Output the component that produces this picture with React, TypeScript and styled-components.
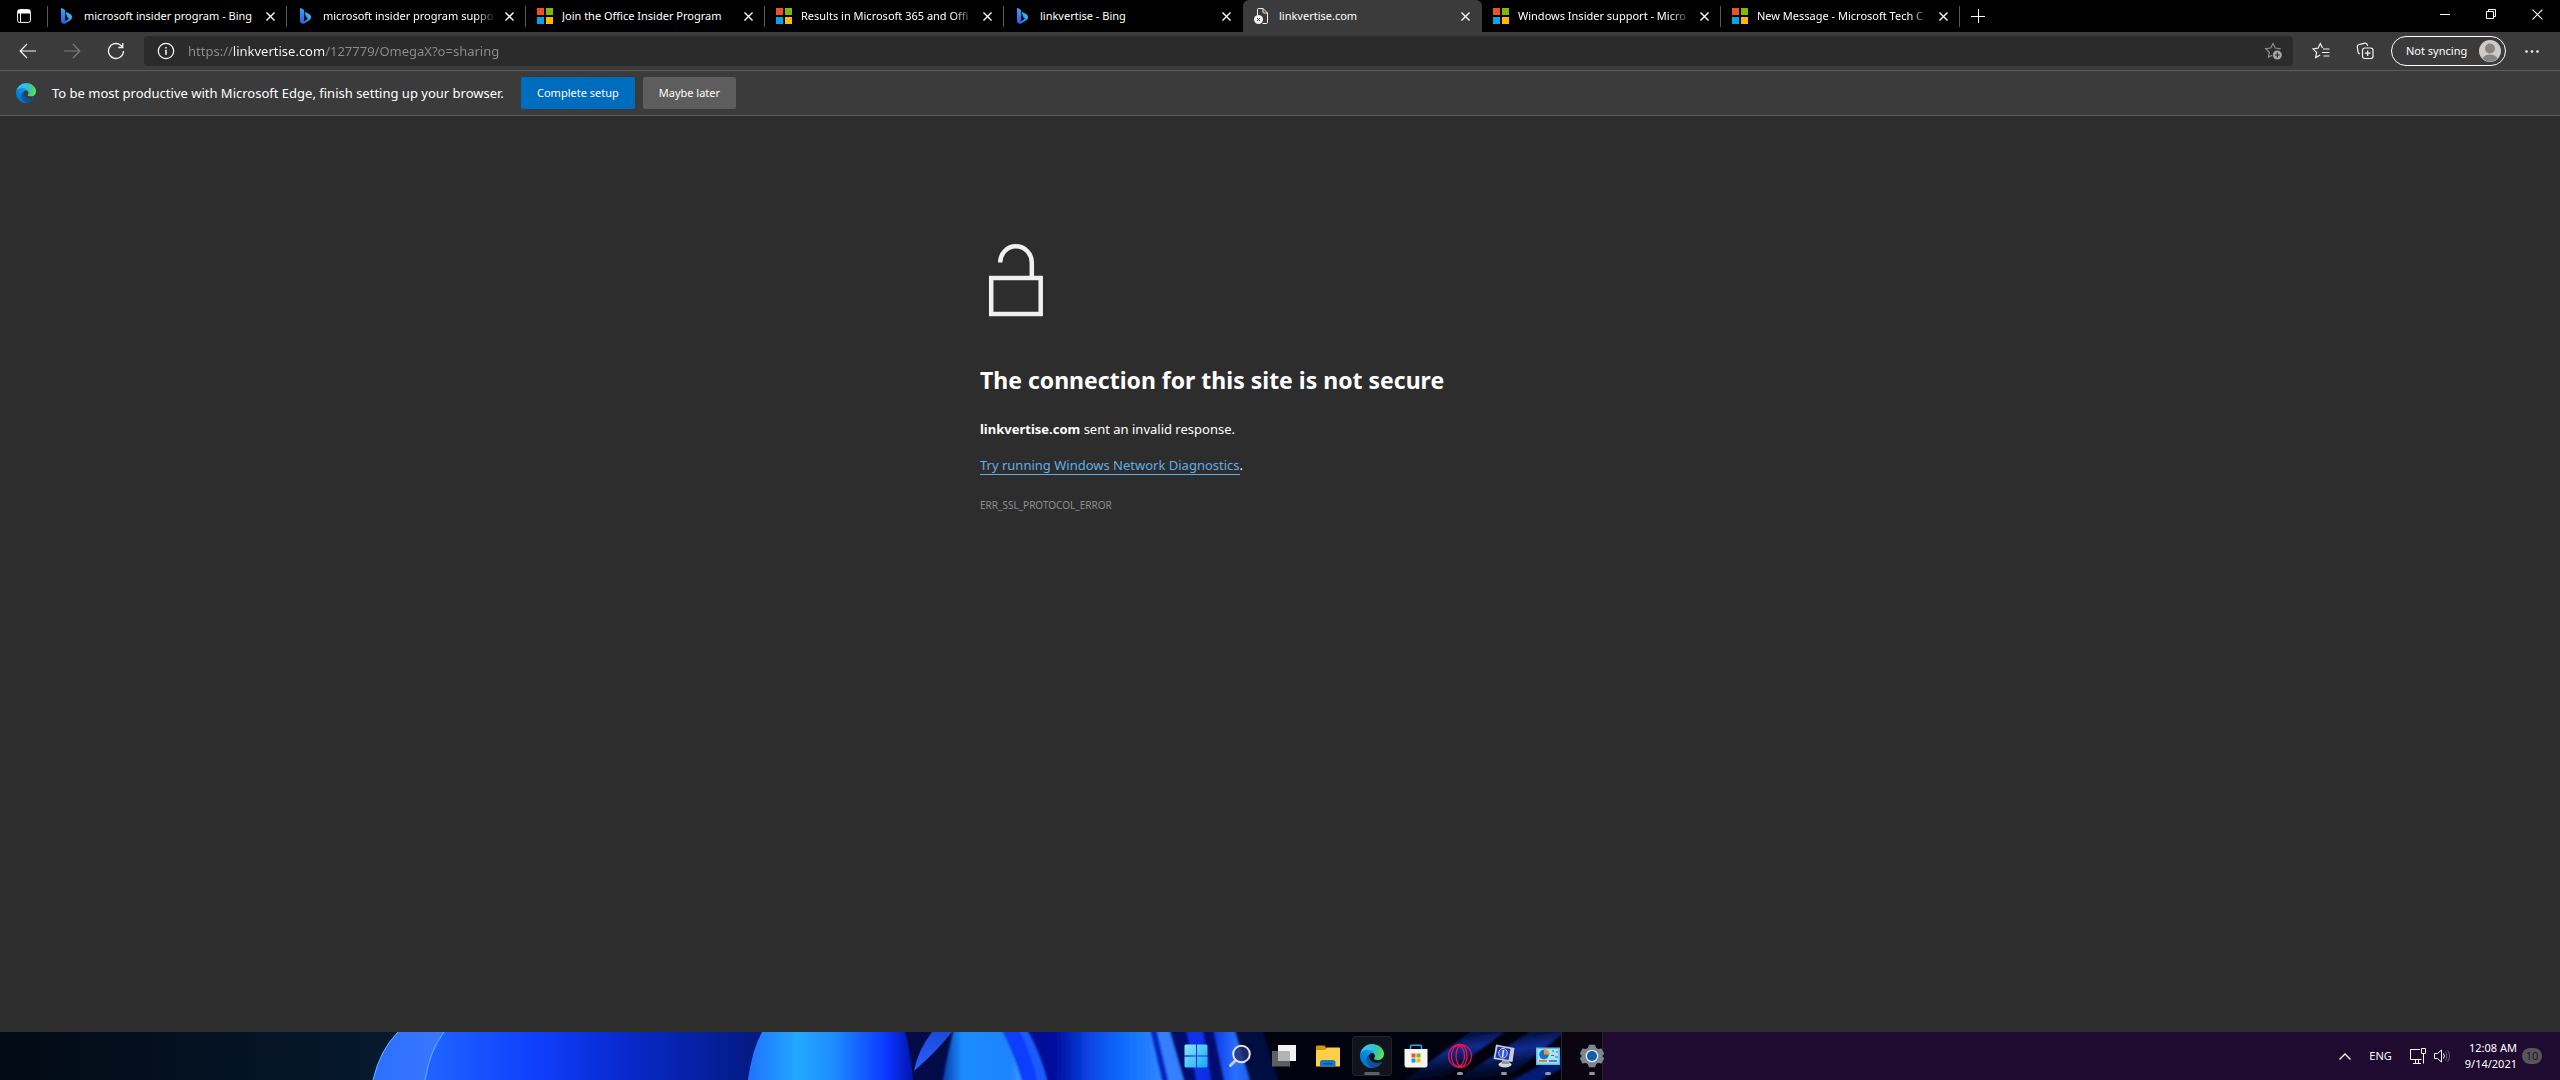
import React from "react";
import styled, { createGlobalStyle, css } from "styled-components";

const ui = `"Noto Sans", "Open Sans", sans-serif`;

const GlobalStyle = createGlobalStyle`
  * { box-sizing: border-box; }
  body { margin: 0; background: #2d2d2d; font-family: ${ui}; }
  button { font-family: inherit; border: 0; padding: 0; margin: 0; background: none; color: inherit; }
  svg { display: block; flex: none; }
`;

const Screen = styled.div`
  display: flex;
  flex-direction: column;
  min-height: 100vh;
  color: #fff;
`;

/* ---------- tab strip ---------- */

const TabStrip = styled.header`
  display: flex;
  height: 32px;
  background: #000;
`;

const TabActions = styled.button`
  display: grid;
  place-items: center;
  width: 48px;
`;

const TabList = styled.div`
  display: flex;
  min-width: 0;
`;

const Tab = styled.div<{ $active?: boolean; $divided?: boolean }>`
  position: relative;
  display: flex;
  align-items: center;
  flex: 0 1 239px;
  width: 239px;
  padding: 0 9px 0 11px;
  ${(p) => p.$active && css`
    background: #3b3b3b;
    border-radius: 6px 6px 0 0;
  `}
  ${(p) => p.$divided && css`
    &::before {
      content: "";
      position: absolute;
      left: -1px;
      top: 6px;
      width: 1px;
      height: 21px;
      background: #5a5a5a;
    }
  `}
`;

const TabTitle = styled.button<{ $fade?: boolean }>`
  flex: 1;
  min-width: 0;
  margin: 0 4px 0 9px;
  overflow: hidden;
  white-space: nowrap;
  text-align: left;
  font-size: 11px;
  line-height: 20px;
  ${(p) => p.$fade && css`
    mask-image: linear-gradient(90deg, #000 calc(100% - 22px), transparent);
  `}
`;

const TabClose = styled.button`
  display: grid;
  place-items: center;
  width: 16px;
  height: 16px;
`;

const NewTab = styled.button`
  position: relative;
  display: grid;
  place-items: center;
  width: 36px;
  &::before {
    content: "";
    position: absolute;
    left: -1px;
    top: 6px;
    width: 1px;
    height: 21px;
    background: #5a5a5a;
  }
`;

const WindowControls = styled.div`
  display: flex;
  margin-left: auto;
`;

const WindowButton = styled.button`
  display: grid;
  place-items: center;
  width: 46px;
  height: 28px;
`;

/* ---------- toolbar ---------- */

const Toolbar = styled.nav`
  display: flex;
  align-items: center;
  height: 39px;
  padding: 0 6px;
  background: #3b3b3b;
  border-bottom: 1px solid #5c5c5c;
`;

const ToolButton = styled.button<{ $dim?: boolean }>`
  display: grid;
  place-items: center;
  width: 44px;
  height: 30px;
  color: ${(p) => (p.$dim ? "#7c7c7c" : "#f4f4f4")};
`;

const AddressBar = styled.form`
  display: flex;
  flex: 1;
  align-items: center;
  height: 30px;
  margin: 0 6px;
  padding: 0 10px 0 12px;
  border-radius: 4px;
  background: #2b2b2b;
`;

const Address = styled.input`
  flex: 1;
  min-width: 0;
  height: 24px;
  margin: 0 12px;
  padding: 0;
  border: 0;
  outline: 0;
  font: 13px/24px ${ui};
  color: transparent;
  background: linear-gradient(90deg, #8d8d8d 46px, #fff 46px, #fff 137px, #8d8d8d 137px);
  background-clip: text;
  -webkit-background-clip: text;
`;

const BarIcon = styled.button`
  display: grid;
  place-items: center;
  width: 20px;
  height: 24px;
`;

const Profile = styled.button`
  display: flex;
  align-items: center;
  justify-content: space-between;
  width: 115px;
  height: 30px;
  margin: 0 4px;
  padding: 0 4px 0 14px;
  border: 1px solid #fff;
  border-radius: 15px;
  font-size: 11px;
  line-height: 16px;
  white-space: nowrap;
`;

/* ---------- setup bar ---------- */

const SetupBar = styled.section`
  display: flex;
  align-items: center;
  height: 45px;
  padding: 0 16px;
  background: #3b3b3b;
  border-bottom: 1px solid #5c5c5c;
`;

const SetupText = styled.p`
  width: 453px;
  margin: 0 0 0 16px;
  font-size: 13px;
  line-height: 20px;
  white-space: nowrap;
`;

const SetupActions = styled.div`
  display: flex;
  gap: 8px;
  margin-left: 16px;
`;

const SetupButton = styled.button<{ $primary?: boolean }>`
  height: 32px;
  padding: 0 16px;
  border-radius: 2px;
  background: ${(p) => (p.$primary ? "#006cbe" : "#5d5d5d")};
  font-size: 11px;
  line-height: 16px;
`;

/* ---------- error page ---------- */

const Page = styled.main`
  flex: 1;
  background: #2d2d2d;
`;

const ErrorBox = styled.article`
  max-width: 600px;
  margin: 0 auto;
  padding-top: 124px;
`;

const Heading = styled.h1`
  margin: 44px 0 0;
  font-size: 23px;
  font-weight: 700;
  line-height: 32px;
`;

const Line = styled.p`
  margin: 21px 0 0;
  font-size: 13px;
  line-height: 24px;
  & + & { margin-top: 12px; }
`;

const Diagnostics = styled.a`
  color: #63ade5;
  text-decoration: none;
  border-bottom: 1px solid #63ade5;
`;

const Code = styled.p`
  margin: 20px 0 0;
  color: #8e8e8e;
  font-size: 10px;
  line-height: 16px;
`;

/* ---------- taskbar ---------- */

const Taskbar = styled.footer`
  position: relative;
  display: grid;
  grid-template-columns: 1173fr auto 945fr;
  height: 48px;
  overflow: hidden;
  background: #200b30;
`;

const Wallpaper = styled.svg`
  position: absolute;
  left: 0;
  top: 0;
`;

const Apps = styled.div`
  position: relative;
  display: flex;
  grid-column: 2;
  align-items: center;
  gap: 4px;
`;

const AppButton = styled.button<{ $active?: boolean; $running?: boolean }>`
  position: relative;
  display: grid;
  place-items: center;
  width: 40px;
  height: 40px;
  border-radius: 4px;
  ${(p) => p.$active && css`
    background: #11131d;
    box-shadow: inset 0 0 0 1px #1f212b;
  `}
  ${(p) => (p.$running || p.$active) && css`
    &::after {
      content: "";
      position: absolute;
      left: 50%;
      bottom: 1px;
      width: ${p.$active ? 16 : 6}px;
      height: 3px;
      border-radius: 2px;
      background: ${p.$active ? "#5d5e62" : "#97979c"};
      transform: translateX(-50%);
    }
  `}
`;

const Tray = styled.div`
  position: relative;
  display: flex;
  align-items: center;
  justify-content: flex-end;
  padding-right: 18px;
`;

const TrayButton = styled.button`
  display: flex;
  align-items: center;
  gap: 8px;
  height: 40px;
  padding: 0 9px;
  font-size: 11px;
  line-height: 16px;
`;

const Clock = styled.button`
  margin: 0 5px 0 6px;
  font-size: 11px;
  line-height: 16px;
  text-align: right;
  white-space: nowrap;
`;

const Badge = styled.span`
  width: 20px;
  border-radius: 8px;
  background: #56555a;
  color: #1d1420;
  text-align: center;
  font-size: 11px;
  line-height: 16px;
`;

/* ---------- drawings ---------- */

const stroke = { fill: "none", stroke: "currentColor" } as const;

const MsLogo = () => (
  <svg width="16" height="16" viewBox="0 0 16 16">
    <path fill="#f25022" d="M0 0h7v7H0z" />
    <path fill="#7fba00" d="M9 0h7v7H9z" />
    <path fill="#00a4ef" d="M0 9h7v7H0z" />
    <path fill="#ffb900" d="M9 9h7v7H9z" />
  </svg>
);

const BingLogo = () => (
  <svg width="16" height="16" viewBox="0 0 16 16">
    <defs>
      <linearGradient id="bingStem" x2="0" y2="1">
        <stop offset="0" stopColor="#3ba4f5" /><stop offset="1" stopColor="#2a5be0" />
      </linearGradient>
      <linearGradient id="bingBowl" x1="1" x2="0" y2="1">
        <stop offset="0" stopColor="#35d8f2" /><stop offset=".6" stopColor="#2b86ee" /><stop offset="1" stopColor="#1f4fd0" />
      </linearGradient>
    </defs>
    <path fill="url(#bingBowl)" d="M7 4.6c0-.4.4-.6.8-.4l3.6 2c1 .6 1.6 1.6 1.6 2.900 0 1.200-.4 2.200-1.300 2.900L6.300 15.500c-1.500.8-3.300-.2-3.300-1.900 1.200.6 2.400.3 3.600-.6L9.800 10.800 8.500 9.600 7.200 6.400z" />
    <path fill="url(#bingStem)" d="M2 .4c0-.4.3-.5.600-.3l2.800 1.300c.5.2.8.6.8 1.200v10.200c0 1.200-.6 2.300-1.800 2.700C3 15.700 2 14.700 2 13.300z" />
  </svg>
);

const BrokenPage = () => (
  <svg width="16" height="16" viewBox="0 0 16 16" stroke="#f2f2f2" fill="none">
    <path d="M3.500 7V1.500q0-1 1-1h4.500l4.500 4.500v9.500q0 1-1 1H8.500M9 .5V4q0 1 1 1h3.500" />
    <circle cx="4.500" cy="11.500" r="4.500" fill="#f2f2f2" stroke="none" />
    <path stroke="#333" d="M3 10l3 3m0-3l-3 3" />
  </svg>
);

const Cross = ({ size = 9, width = 1.5 }: { size?: number; width?: number }) => (
  <svg width={size} height={size} viewBox="0 0 10 10" {...stroke} strokeWidth={width}>
    <path d="M.5.5l9 9m0-9l-9 9" />
  </svg>
);

const EdgeLogo = ({ id, size }: { id: string; size: number }) => (
  <svg width={size} height={size} viewBox="0 0 256 256">
    <defs>
      <linearGradient id={id + "a"} x1="63" x2="241" y1="177" y2="177" gradientUnits="userSpaceOnUse">
        <stop offset="0" stopColor="#0c59a4" /><stop offset="1" stopColor="#114a8b" />
      </linearGradient>
      <linearGradient id={id + "b"} x1="157" x2="46" y1="99" y2="221" gradientUnits="userSpaceOnUse">
        <stop offset="0" stopColor="#1b9de2" /><stop offset=".16" stopColor="#1595df" /><stop offset=".67" stopColor="#0680d7" /><stop offset="1" stopColor="#0078d4" />
      </linearGradient>
      <radialGradient id={id + "c"} cx="26" cy="48" r="240" gradientUnits="userSpaceOnUse">
        <stop offset="0" stopColor="#35c1f1" /><stop offset=".3" stopColor="#34c1ed" /><stop offset=".55" stopColor="#2fc2c0" /><stop offset=".8" stopColor="#4ace76" /><stop offset="1" stopColor="#66eb6e" />
      </radialGradient>
    </defs>
    <path fill={`url(#${id}a)`} d="M231 190.500c-3.400 1.800-6.900 3.400-10.500 4.700a101.700 101.700 0 0 1-35.900 6.400c-47.300 0-88.500-32.500-88.500-74.300 0-11.400 6.400-21.900 16.400-27.300-42.800 1.800-53.800 46.400-53.800 72.500 0 74 68.100 81.400 82.800 81.400 7.900 0 19.800-2.300 27-4.600l1.300-.4a128.300 128.300 0 0 0 66.600-52.800 4 4 0 0 0-5.400-5.600z" />
    <path fill={`url(#${id}b)`} d="M105.700 241.400a79.200 79.200 0 0 1-22.700-21.300 80.700 80.700 0 0 1 29.500-120c3.200-1.500 8.500-4.100 15.600-4a32.400 32.400 0 0 1 25.700 13 31.900 31.900 0 0 1 6.300 18.700c0-.2 24.500-79.600-80-79.600-43.900 0-80 41.600-80 78.200a130.200 130.200 0 0 0 12.100 56 128 128 0 0 0 156.400 67.100 75.500 75.500 0 0 1-62.800-8z" />
    <path fill={`url(#${id}c)`} d="M152.300 148.900c-.9 1-3.400 2.500-3.400 5.600 0 2.600 1.700 5.200 4.800 7.300 14.300 10 41.400 8.600 41.500 8.600a59.600 59.600 0 0 0 30.300-8.300 61.400 61.400 0 0 0 30.400-52.900c.3-22.400-8-37.300-11.300-43.900C223.500 23.900 177.700 0 128 0A128 128 0 0 0 0 126.200c.5-36.500 36.800-66 80-66 3.500 0 23.500.3 42 10 16.300 8.600 24.900 19 30.800 29.300 6.200 10.700 7.300 24.100 7.300 29.500s-2.700 13.300-7.800 19.900z" />
  </svg>
);

const icons = {
  actions: (
    <svg width="14" height="14" viewBox="0 0 14 14" {...stroke}>
      <rect x=".6" y=".6" width="12.800" height="12.800" rx="2" /><path fill="currentColor" stroke="none" d="M1 1h12v3.500H1z" /><path d="M3.500 4v9" />
    </svg>
  ),
  back: <svg width="18" height="16" viewBox="0 0 18 16" {...stroke} strokeWidth="1.200"><path d="M17 8H1.500M8 1L1.200 8 8 15" /></svg>,
  forward: <svg width="18" height="16" viewBox="0 0 18 16" {...stroke} strokeWidth="1.200"><path d="M1 8h15.500M10 1l6.800 7L10 15" /></svg>,
  reload: <svg width="18" height="18" viewBox="0 0 18 18" {...stroke} strokeWidth="1.300"><path d="M16.500 9A7.500 7.500 0 1 1 13.500 3l2 2M15.800 1v4.500h-4.500" /></svg>,
  info: (
    <svg width="18" height="18" viewBox="0 0 18 18" {...stroke} strokeWidth="1.200">
      <circle cx="9" cy="9" r="7.700" /><path strokeWidth="1.500" d="M9 7.800v5M9 5v1.500" />
    </svg>
  ),
  starAdd: (
    <svg width="18" height="18" viewBox="0 0 18 18" fill="none" stroke="#8f8f8f" strokeWidth="1.200">
      <path d="M15.500 7.500l.6-.8-4.900-.7L9 1.500 6.700 6l-5 .7 3.600 3.500-.8 5L8 13.300" />
      <circle cx="13.300" cy="13" r="4.500" fill="#a8a8a8" stroke="none" /><path stroke="#2b2b2b" d="M13.300 10.500v5M10.800 13h5" />
    </svg>
  ),
  favorites: (
    <svg width="18" height="18" viewBox="0 0 18 18" {...stroke} strokeWidth="1.200">
      <path d="M10.500 6L8.300 1.500 6 6.200l-5 .7 3.600 3.500-.9 5.200 4.500-2.500M11 7h6.500M10 10.500h7.500M11.500 14h6" />
    </svg>
  ),
  collections: (
    <svg width="18" height="18" viewBox="0 0 18 18" {...stroke} strokeWidth="1.200">
      <rect x="6.500" y="6" width="10.500" height="10.500" rx="2.200" /><path d="M11.700 8.500v5.500M9 11.200h5.500M3.800 11.800l-.7-.2Q2 11 2 9.800L1.300 4.700Q1.200 3.200 2.700 2.700L9 1.200Q10.500 1 11.200 2.500L11.500 4" />
    </svg>
  ),
  more: <svg width="14" height="3" viewBox="0 0 14 3" fill="currentColor"><circle cx="1.500" cy="1.500" r="1.300" /><circle cx="7" cy="1.500" r="1.300" /><circle cx="12.500" cy="1.500" r="1.300" /></svg>,
  avatar: (
    <svg width="22" height="22" viewBox="0 0 22 22">
      <circle cx="11" cy="11" r="11" fill="#cdcac7" /><circle cx="11" cy="8.500" r="5" fill="#888481" />
      <path fill="#888481" d="M3.500 18.500q2-4 7.500-4t7.500 4A11 11 0 0 1 3.500 18.500z" />
    </svg>
  ),
  plus: <svg width="14" height="14" viewBox="0 0 14 14" {...stroke}><path d="M7.500 0v14M0 7.500h14" /></svg>,
  minimize: <svg width="10" height="10" viewBox="0 0 10 10" {...stroke}><path d="M0 5.500h10" /></svg>,
  restore: <svg width="10" height="10" viewBox="0 0 10 10" {...stroke}><path d="M.5 2.500h7v7h-7zM2.500 2V.5h7v7H8" /></svg>,
};

const OpenLock = () => (
  <svg width="72" height="80" viewBox="0 0 72 80" fill="none" stroke="#f0f0f0">
    <path strokeWidth="4.500" d="M11.200 38h49.500v36h-49.500z" />
    <path strokeWidth="4.500" d="M20.200 22.500c0-9 7-16.200 15.700-16.200S51.800 13.500 51.800 22.500V37" />
  </svg>
);

const appIcons = {
  start: (
    <svg width="24" height="24" viewBox="0 0 24 24">
      <defs><linearGradient id="start" x2="1" y2="1"><stop stopColor="#8de9ff" /><stop offset="1" stopColor="#12a4f5" /></linearGradient></defs>
      <path fill="url(#start)" d="M1.500.5H12v11H.5v-10zM13 .5h9.500l1 1v10H13zM.5 12.500H12v11H1.500l-1-1zM13 12.500h10.500v10l-1 1H13z" />
    </svg>
  ),
  search: (
    <svg width="24" height="24" viewBox="0 0 24 24" fill="none">
      <path stroke="#c9c9cc" strokeWidth="3" strokeLinecap="round" d="M8 16l-5.500 5.500" />
      <circle cx="13.500" cy="10" r="8.300" fill="#24306f" fillOpacity=".75" stroke="#e2e2e5" strokeWidth="2" />
    </svg>
  ),
  views: (
    <svg width="24" height="24" viewBox="0 0 24 24">
      <path fill="#f3f3f3" d="M6 1h18v16H6z" /><path fill="#5f5f61" d="M0 7h18v15.500H0z" /><path fill="#b4b4b6" d="M6 7h12v10H6z" />
    </svg>
  ),
  files: (
    <svg width="24" height="24" viewBox="0 0 24 24">
      <path fill="#d89408" d="M0 2.500Q0 1.500 1 1.500h7.500l2 2.500v4H0z" /><path fill="#ffcf48" d="M0 6h9l2-2.500h12q1 0 1 1V22.500H0z" />
      <path fill="#1577c8" d="M4 22.500v-4q0-2.500 2.500-2.500h10.500q2.500 0 2.500 2.500v4z" /><path fill="#0c5699" d="M7.500 19h9v1.500h-9z" />
    </svg>
  ),
  store: (
    <svg width="24" height="24" viewBox="0 0 24 24">
      <path fill="none" stroke="#2aa8ee" strokeWidth="1.600" d="M6.500 6.500v-4q0-1.200 1.200-1.200h8.600q1.200 0 1.200 1.200v4" />
      <path fill="#f5f5f5" d="M.5 5h23v16q0 2.500-2.500 2.500H3Q.5 23.500.5 21z" />
      <path fill="#f25022" d="M7.500 9.500h4v4h-4z" /><path fill="#7fba00" d="M12.500 9.500h4v4h-4z" /><path fill="#00a4ef" d="M7.500 14.500h4v4h-4z" /><path fill="#ffb900" d="M12.500 14.500h4v4h-4z" />
    </svg>
  ),
  opera: (
    <svg width="26" height="26" viewBox="0 0 26 26" fill="none" stroke="#e0184a" strokeWidth="1.300">
      <circle cx="13" cy="13" r="11.500" /><ellipse cx="11" cy="13" rx="6.500" ry="10.500" /><ellipse cx="14.500" cy="13" rx="5.500" ry="10.500" />
    </svg>
  ),
  monitor: (
    <svg width="24" height="26" viewBox="0 0 24 26">
      <ellipse cx="13" cy="21.500" rx="6.500" ry="3" fill="#d2d4d6" /><path fill="#92979b" d="M10 17h7v4h-7z" />
      <path fill="#c8ccd1" d="M4 1.500l18.500 3.500-2 14L1.500 16z" /><path fill="#2033b0" d="M5.500 3.500l13 2.500-2 11L3.500 14.500z" />
      <ellipse cx="11" cy="10.200" rx="4.300" ry="4.800" fill="#3856d8" stroke="#b9cdf7" /><path stroke="#e8f0ff" strokeWidth="1.500" d="M11.500 7l-1 7" />
    </svg>
  ),
  panel: (
    <svg width="24" height="24" viewBox="0 0 24 24">
      <path fill="#5bbdec" d="M0 3.500h24v17.500H0z" /><path fill="#a9e2fb" d="M1.500 5h21v14.500h-21z" />
      <circle cx="8" cy="10.500" r="4.800" fill="#1473c8" /><path fill="#f7941e" d="M8 10.500V5a5.500 5.500 0 0 1 5.500 5.500z" />
      <path stroke="#2b75a8" strokeWidth="1.200" d="M16 7h2M20 8h2M15 11.500h3M19 13h3" /><path stroke="#e07c1a" strokeWidth="1.800" d="M3 17h8" /><path stroke="#27699a" strokeWidth="1.500" d="M13 17h8" />
    </svg>
  ),
  settings: (
    <svg width="24" height="24" viewBox="0 0 24 24">
      <path fill="#7e868f" stroke="#7e868f" strokeLinejoin="round" strokeWidth="1.500" d="M9.500 1.500h5l1 3 2.500 1.500 3-.8 2.300 4.300-2.200 2.500 2.200 2.500-2.300 4.300-3-.8-2.500 1.500-1 3h-5l-1-3L6 18l-3 .8L.7 14.500 2.900 12 .7 9.500 3 5.200l3 .8 2.500-1.500z" />
      <circle cx="12" cy="12" r="6.300" fill="#eceff2" /><circle cx="12" cy="12" r="5" fill="#0c5cb0" />
    </svg>
  ),
};

const WallpaperArt = () => (
  <Wallpaper width="1603" height="48" viewBox="0 0 1603 48" aria-hidden="true">
    <defs>
      <linearGradient id="night"><stop stopColor="#020a14" /><stop offset="1" stopColor="#061a30" /></linearGradient>
      <linearGradient id="rim"><stop stopColor="#2c6fff" /><stop offset=".9" stopColor="#3e78ff" /><stop offset="1" stopColor="#2057f0" /></linearGradient>
      <linearGradient id="body"><stop stopColor="#2065ff" /><stop offset=".3" stopColor="#0f3fff" /><stop offset=".55" stopColor="#0829cc" /><stop offset="1" stopColor="#03166f" /></linearGradient>
      <linearGradient id="petal"><stop stopColor="#1f72ff" /><stop offset=".3" stopColor="#22a8ff" /><stop offset=".5" stopColor="#1f90ff" /><stop offset=".85" stopColor="#0a35ff" /><stop offset="1" stopColor="#0314a8" /></linearGradient>
      <linearGradient id="leaf" x2="0" y2="1"><stop stopColor="#1c49d8" /><stop offset="1" stopColor="#2a62ff" /></linearGradient>
      <linearGradient id="cone"><stop stopColor="#0738a8" /><stop offset=".25" stopColor="#1c8cff" /><stop offset=".85" stopColor="#1e84ff" /><stop offset="1" stopColor="#3f9cff" /></linearGradient>
      <linearGradient id="fold"><stop stopColor="#02058a" /><stop offset=".25" stopColor="#0310a0" /><stop offset=".5" stopColor="#0848e8" /><stop offset=".75" stopColor="#1070ff" /><stop offset="1" stopColor="#3088ff" /></linearGradient>
      <linearGradient id="band"><stop stopColor="#0a35f0" /><stop offset="1" stopColor="#0a2ce0" /></linearGradient>
      <linearGradient id="band2"><stop stopColor="#0b38e8" /><stop offset=".6" stopColor="#2a70ff" /><stop offset="1" stopColor="#1c5cf0" /></linearGradient>
      <linearGradient id="streak" x1="0" y1="0" x2=".3" y2="1"><stop stopColor="#04103c" stopOpacity="0" /><stop offset=".5" stopColor="#0d2c96" /><stop offset="1" stopColor="#04103c" stopOpacity="0" /></linearGradient>
      <filter id="soft" x="-20%" width="140%"><feGaussianBlur stdDeviation="1" /></filter>
    </defs>
    <path fill="#01020e" d="M0 0h1562v48H0z" />
    <path fill="url(#night)" d="M0 0h420v48H0z" />
    <path fill="url(#rim)" d="M373 48Q380 18 398 0H470V48z" />
    <path fill="url(#body)" d="M425 48Q430 18 444 0H790V48z" />
    <path fill="none" stroke="#67b4ff" d="M373 48Q380 18 398 0M425 48Q430 18 444 0" />
    <path fill="#020a48" d="M900 0h80v48h-80z" />
    <path fill="url(#petal)" d="M748 48Q752 18 762 0H905Q911 20 913 48z" />
    <path fill="url(#leaf)" d="M932 0H952Q936 20 914 39Q918 18 932 0z" />
    <g filter="url(#soft)">
      <path fill="url(#fold)" d="M1020 -4H1150L1163 52H1030z" />
      <path fill="url(#cone)" d="M954 -4H1001Q1015 22 1023 52H942Q948 20 954 -4z" />
      <path fill="#0a3cff" d="M1001 -4H1022Q1036 22 1043 52H1023Q1015 22 1001 -4z" />
      <path fill="#1c5cff" d="M1018 -4H1026Q1041 22 1048 52H1038Q1032 22 1018 -4z" />
      <path fill="#0624c8" d="M1150 -4H1156L1169 52H1163z" />
      <path fill="#3480ff" d="M1156 -4H1169L1185 52H1169z" />
      <path fill="#020c70" d="M1169 -4H1186L1197 52H1185z" />
      <path fill="url(#band)" d="M1186 -4H1203L1212 52H1197z" />
      <path fill="#030b70" d="M1203 -4H1214L1225 52H1212z" />
      <path fill="url(#band2)" d="M1213 -4H1234L1251 52H1225z" />
      <path fill="#030840" d="M1234 -4H1262L1280 52H1251z" />
      <path fill="url(#streak)" d="M1400 52L1475 -4H1510L1435 52z" />
      <path fill="url(#streak)" d="M1450 52L1535 -4H1570L1500 52z" />
      <path fill="#0a2fb8" opacity=".6" d="M1505 52L1562 22V36L1535 52z" />
    </g>
    <path fill="#0a0510" d="M1562 0h41v48h-41z" />
    <path fill="#29262c" d="M1561 0h1v48h-1zM1602 0h1v48h-1z" />
  </Wallpaper>
);

/* ---------- data ---------- */

const tabs = [
  { title: "microsoft insider program - Bing", icon: <BingLogo /> },
  { title: "microsoft insider program suppo", icon: <BingLogo />, fade: true },
  { title: "Join the Office Insider Program", icon: <MsLogo /> },
  { title: "Results in Microsoft 365 and Offi", icon: <MsLogo />, fade: true },
  { title: "linkvertise - Bing", icon: <BingLogo /> },
  { title: "linkvertise.com", icon: <BrokenPage />, active: true },
  { title: "Windows Insider support - Micro", icon: <MsLogo />, fade: true },
  { title: "New Message - Microsoft Tech C", icon: <MsLogo />, fade: true },
];

const apps = [
  { name: "Start", icon: appIcons.start },
  { name: "Search", icon: appIcons.search },
  { name: "Task View", icon: appIcons.views },
  { name: "File Explorer", icon: appIcons.files },
  { name: "Microsoft Edge", icon: <EdgeLogo id="taskEdge" size={24} />, active: true },
  { name: "Microsoft Store", icon: appIcons.store },
  { name: "Opera", icon: appIcons.opera, running: true },
  { name: "System", icon: appIcons.monitor, running: true },
  { name: "Control Panel", icon: appIcons.panel, running: true },
  { name: "Settings", icon: appIcons.settings, running: true },
];

export default function App() {
  return (
    <Screen>
      <GlobalStyle />
      <TabStrip>
        <TabActions aria-label="Tab actions">{icons.actions}</TabActions>
        <TabList>
          {tabs.map((t, i) => (
            <Tab key={t.title} $active={t.active} $divided={!t.active && !tabs[i - 1]?.active}>
              {t.icon}
              <TabTitle $fade={t.fade}>{t.title}</TabTitle>
              <TabClose aria-label={"Close " + t.title}><Cross /></TabClose>
            </Tab>
          ))}
        </TabList>
        <NewTab aria-label="New tab">{icons.plus}</NewTab>
        <WindowControls>
          <WindowButton aria-label="Minimize">{icons.minimize}</WindowButton>
          <WindowButton aria-label="Restore">{icons.restore}</WindowButton>
          <WindowButton aria-label="Close"><Cross size={11} width={1} /></WindowButton>
        </WindowControls>
      </TabStrip>

      <Toolbar>
        <ToolButton aria-label="Back">{icons.back}</ToolButton>
        <ToolButton aria-label="Forward" $dim>{icons.forward}</ToolButton>
        <ToolButton aria-label="Refresh">{icons.reload}</ToolButton>
        <AddressBar onSubmit={(e) => e.preventDefault()}>
          <BarIcon type="button" aria-label="View site information">{icons.info}</BarIcon>
          <Address aria-label="Address" defaultValue="https://linkvertise.com/127779/OmegaX?o=sharing" spellCheck={false} />
          <BarIcon type="button" aria-label="Add to favorites">{icons.starAdd}</BarIcon>
        </AddressBar>
        <ToolButton aria-label="Favorites">{icons.favorites}</ToolButton>
        <ToolButton aria-label="Collections">{icons.collections}</ToolButton>
        <Profile>Not syncing{icons.avatar}</Profile>
        <ToolButton aria-label="More">{icons.more}</ToolButton>
      </Toolbar>

      <SetupBar>
        <EdgeLogo id="setupEdge" size={20} />
        <SetupText>To be most productive with Microsoft Edge, finish setting up your browser.</SetupText>
        <SetupActions>
          <SetupButton $primary>Complete setup</SetupButton>
          <SetupButton>Maybe later</SetupButton>
        </SetupActions>
      </SetupBar>

      <Page>
        <ErrorBox>
          <OpenLock />
          <Heading>The connection for this site is not secure</Heading>
          <Line><strong>linkvertise.com</strong> sent an invalid response.</Line>
          <Line><Diagnostics href="#">Try running Windows Network Diagnostics</Diagnostics>.</Line>
          <Code>ERR_SSL_PROTOCOL_ERROR</Code>
        </ErrorBox>
      </Page>

      <Taskbar>
        <WallpaperArt />
        <Apps>
          {apps.map((a) => (
            <AppButton key={a.name} aria-label={a.name} $active={a.active} $running={a.running}>{a.icon}</AppButton>
          ))}
        </Apps>
        <Tray>
          <TrayButton aria-label="Show hidden icons">
            <svg width="12" height="7" viewBox="0 0 12 7" {...stroke} strokeWidth="1.300"><path d="M.5 6.500L6 1l5.500 5.500" /></svg>
          </TrayButton>
          <TrayButton>ENG</TrayButton>
          <TrayButton aria-label="Network and volume">
            <svg width="16" height="16" viewBox="0 0 16 16" {...stroke}>
              <path d="M10 1.500H.5v10h11M3 15.500h8M5.500 12v3M8.500 12v3M11.500.5h4v5h-4zM13.500 6v9.500" />
            </svg>
            <svg width="16" height="16" viewBox="0 0 16 16" {...stroke}>
              <path d="M.5 5.500h3L7.500 2v12l-4-3.500h-3zM9.500 5.500q1.800 2.500 0 5" /><path stroke="#6c5b78" d="M11.500 3.500q3 4.500 0 9M13.500 2q4 6 0 12" />
            </svg>
          </TrayButton>
          <Clock>12:08 AM<br />9/14/2021</Clock>
          <Badge>10</Badge>
        </Tray>
      </Taskbar>
    </Screen>
  );
}
